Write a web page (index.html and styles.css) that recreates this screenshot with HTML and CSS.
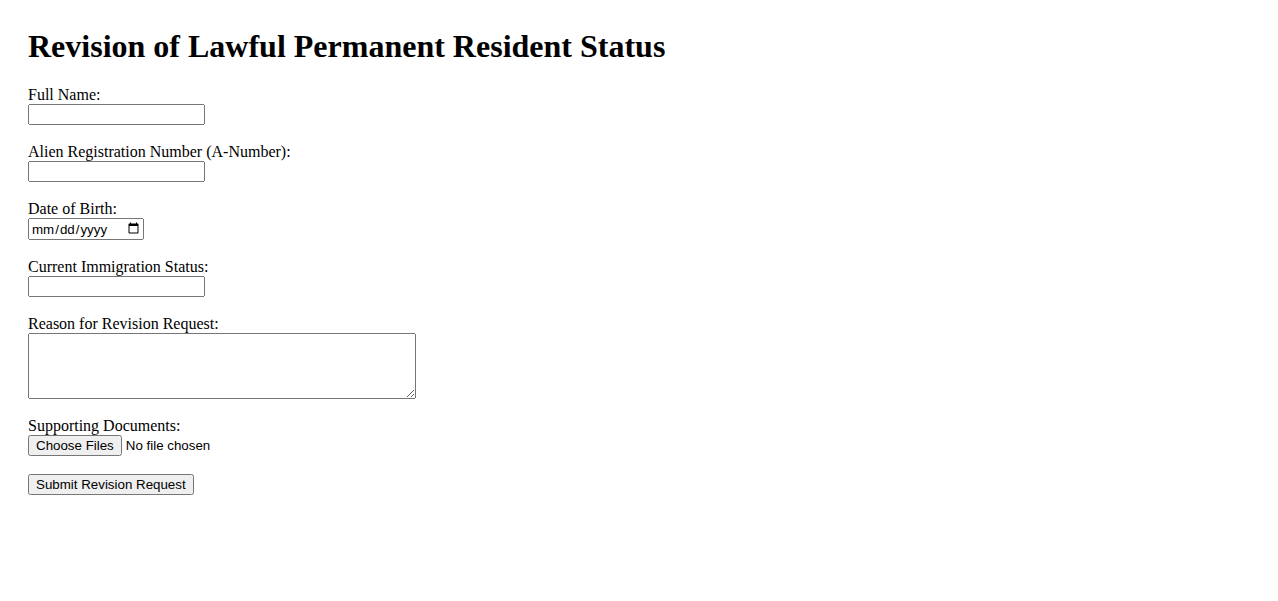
FILE: index.html
```html
<!DOCTYPE html>
<html lang="en">
<head>
    <meta charset="UTF-8">
    <title>Revision of Lawful Permanent Resident Status</title>
    <link rel="stylesheet" href="styles.css">
</head>
<body>
<h1>Revision of Lawful Permanent Resident Status</h1>
<form action="">
    <label for="fullName">Full Name:</label><br>
    <input type="text" id="fullName" name="fullName" class="field"><br><br>

    <label for="aNumber">Alien Registration Number (A-Number):</label><br>
    <input type="text" id="aNumber" name="aNumber" class="field"><br><br>

    <label for="dob">Date of Birth:</label><br>
    <input type="date" id="dob" name="dob" class="date-field"><br><br>

    <label for="status">Current Immigration Status:</label><br>
    <input type="text" id="status" name="status" class="field"><br><br>

    <label for="reason">Reason for Revision Request:</label><br>
    <textarea id="reason" name="reason" rows="4" cols="50" class="reason"></textarea><br><br>

    <label for="docs">Supporting Documents:</label><br>
    <input type="file" id="docs" name="docs" multiple><br><br>

    <input type="submit" value="Submit Revision Request">
</form>
</body>
</html>
```

FILE: styles.css
```css
body {
    font-family: "Liberation Serif", serif;
    padding: 20px;
    margin: 8px;
}
h1 {
    margin-top: 0;
}
input, button {
    font-family: "Liberation Sans", Arial, sans-serif;
}
.field {
    box-sizing: border-box;
    width: 177px;
}
.date-field {
    box-sizing: border-box;
    width: 116px;
}
.reason {
    box-sizing: border-box;
    width: 388px;
    height: 66px;
    vertical-align: bottom;
}
```
